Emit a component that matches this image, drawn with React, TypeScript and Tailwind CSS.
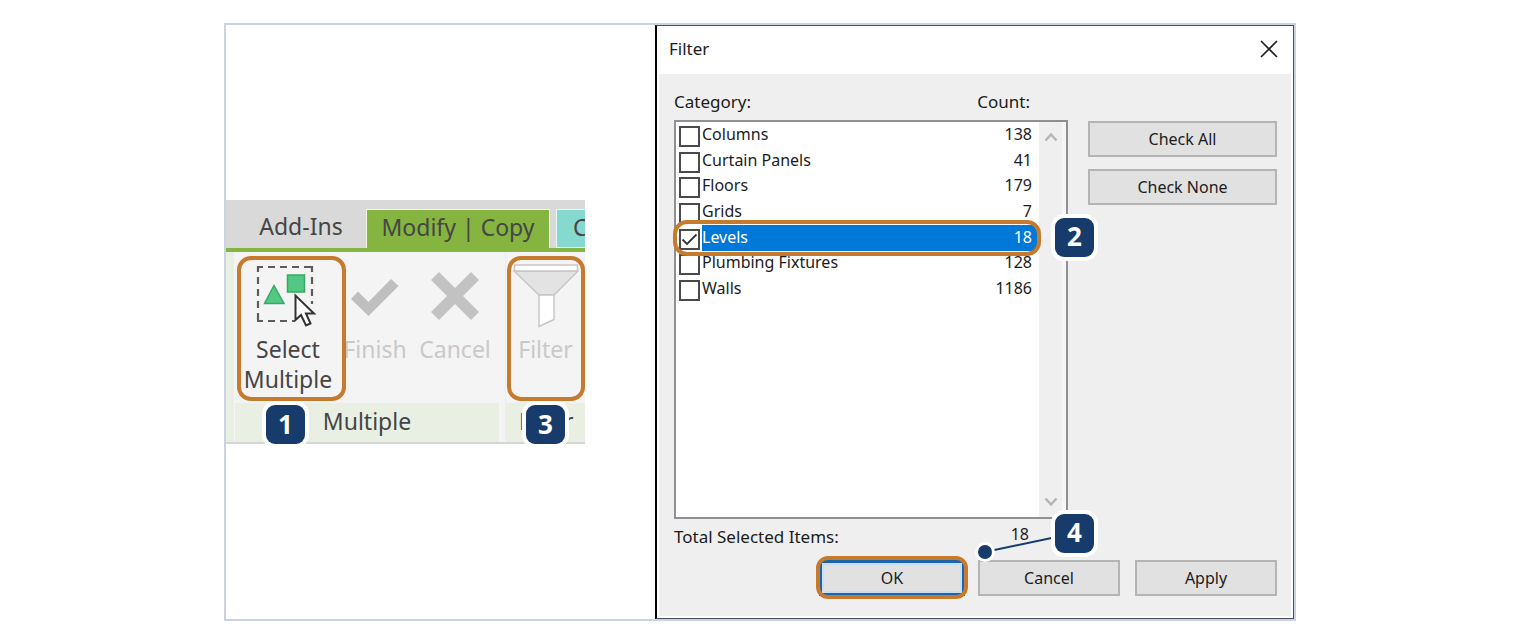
import React, { useState } from 'react';

interface Category {
  name: string;
  count: number;
}

const CATEGORIES: Category[] = [
  { name: 'Columns', count: 138 },
  { name: 'Curtain Panels', count: 41 },
  { name: 'Floors', count: 179 },
  { name: 'Grids', count: 7 },
  { name: 'Levels', count: 18 },
  { name: 'Plumbing Fixtures', count: 128 },
  { name: 'Walls', count: 1186 },
];

// Numbered callout, placed by its parent
const StepBadge: React.FC<{ step: number; className: string }> = ({ step, className }) => (
  <span
    className={`absolute z-20 flex h-[39px] w-[39px] items-center justify-center rounded-[9px] bg-[#173b6b] pb-[2px] font-['Open_Sans','Noto_Sans',sans-serif] text-[26px] font-bold text-white ring-4 ring-white ${className}`}
  >
    {step}
  </span>
);

const Highlight: React.FC<{ className: string }> = ({ className }) => (
  <span className={`pointer-events-none absolute z-10 border-4 border-[#c67a2e] ${className}`}></span>
);

const SelectIcon = () => (
  <svg className="h-[64px] w-[64px]" viewBox="0 0 64 64" fill="none">
    <g stroke="#5c5c5c" strokeWidth="2.2">
      <path d="M1 3H57" strokeDasharray="7 5" strokeDashoffset="1" />
      <path d="M1 57H39" strokeDasharray="7 5" strokeDashoffset="1" />
      <path d="M2 2V58" strokeDasharray="7 5" strokeDashoffset="1" />
      <path d="M56 2V40" strokeDasharray="7 5" strokeDashoffset="1" />
    </g>
    <path d="M18 21.500L28 39.500H8.500Z" fill="#52c882" stroke="#38a667" strokeWidth="1.500" />
    <rect x="31.500" y="11" width="17" height="17" fill="#52c882" stroke="#38a667" strokeWidth="1.500" />
    <path
      d="M39.500 31.500V56L45 51L50 61.500L54.500 59.500L50 49.500H58Z"
      fill="#fff"
      stroke="#333"
      strokeWidth="2"
    />
  </svg>
);

const FinishIcon = () => (
  <svg className="h-[64px] w-[50px]" viewBox="0 0 50 64">
    <path d="M1 35L8 27.500L18.500 38L41 15L48.500 22L18.500 52Z" fill="#bfbfbf" />
  </svg>
);

const CancelIcon = () => (
  <svg className="h-[64px] w-[50px]" viewBox="0 0 50 64">
    <path
      d="M1 16L9 8L25 24L41 8L49 16L33 32L49 48L41 56L25 40L9 56L1 48L17 32Z"
      fill="#c2c2c2"
    />
  </svg>
);

const FunnelIcon = () => (
  <svg className="h-[64px] w-[66px]" viewBox="0 0 66 64" stroke="#c6c6c6" strokeWidth="1.500">
    <path d="M1 7H65L41 31H26Z" fill="#e3e3e3" />
    <rect x="1.500" y="1" width="63" height="6" fill="#fff" />
    <path d="M26 31H41V55.500L26 62.500Z" fill="#fff" />
  </svg>
);

const Ribbon = () => (
  <div className="w-full max-w-[359px] font-['Noto_Sans','Open_Sans',sans-serif] text-[23px] text-[#454545]">
    <nav className="flex h-[48px] items-end overflow-hidden bg-[#d9d9d9]">
      <button className="h-[39px] w-[140px] shrink-0 pb-[4px] pl-[10px] leading-[35px]">Add-Ins</button>
      <button className="h-[39px] w-[184px] shrink-0 border border-b-0 border-[#f0f8e6] bg-[#85b440] pb-[4px] leading-[34px] whitespace-nowrap">
        Modify | Copy
      </button>
      <button
        className="ml-[6px] h-[39px] flex-1 overflow-hidden border border-r-0 border-[#e8f6f4] bg-[#85d9cf] pb-[4px] pl-[16px] text-left leading-[34px]"
        aria-label="Next tab"
      >
        C
      </button>
    </nav>
    <div className="h-[4px] bg-[#85b440]"></div>

    <div className="flex border-b-2 border-[#d4d7d8] bg-[#f4f4f4]">
      <div className="w-[9px] shrink-0 border-r border-[#f4f7f1] bg-[#e9efe3]"></div>
      <section className="w-[264px] shrink-0">
        <div className="flex h-[151px] text-[#c9c9c9]">
          <button className="relative flex w-[106px] shrink-0 flex-col items-center pt-[12px] text-[#454545]">
            <SelectIcon />
            <span className="mt-[6px] leading-[30px]">
              Select
              <br />
              Multiple
            </span>
            <Highlight className="top-[4px] left-[2px] h-[145px] w-[109px] rounded-[14px]" />
          </button>
          <button className="flex w-[68px] shrink-0 flex-col items-center pt-[12px]">
            <FinishIcon />
            <span className="mt-[6px] leading-[30px]">Finish</span>
          </button>
          <button className="flex flex-1 flex-col items-center pt-[12px] pl-[2px]">
            <CancelIcon />
            <span className="mt-[6px] leading-[30px]">Cancel</span>
          </button>
        </div>
        <div className="relative h-[39px] bg-[#e9efe3] text-center leading-[36px]">
          Multiple
          <StepBadge step={1} className="top-[2px] left-[31px]" />
        </div>
      </section>
      <section className="ml-[6px] flex-1 border-l border-[#e9efe3]">
        <button className="relative flex h-[151px] w-full flex-col items-center pt-[12px] text-[#c9c9c9]">
          <FunnelIcon />
          <span className="mt-[6px] leading-[30px]">Filter</span>
          <Highlight className="top-[4px] left-px h-[145px] w-[78px] rounded-[14px]" />
        </button>
        <div className="relative h-[39px] bg-[#e9efe3] pl-[13px] leading-[36px]">
          Filter
          <StepBadge step={3} className="top-[2px] left-[20px]" />
        </div>
      </section>
    </div>
  </div>
);

const FilterDialog = () => {
  const [checked, setChecked] = useState<string[]>(['Levels']);

  const total = CATEGORIES.filter((c) => checked.includes(c.name)).reduce((sum, c) => sum + c.count, 0);

  const toggle = (name: string) => {
    setChecked((prev) => (prev.includes(name) ? prev.filter((n) => n !== name) : [...prev, name]));
  };

  const buttonStyle = 'h-[36px] border-2 border-[#b4b4b4] bg-[#e1e1e1]';

  return (
    <div
      role="dialog"
      aria-label="Filter"
      className="w-[639px] shrink-0 border border-l-2 border-[#4a5060] border-l-black bg-white font-['Noto_Sans','Open_Sans',sans-serif] text-[16px] text-[#1c1c1c]"
    >
      <header className="flex h-[48px] items-center justify-between pr-[15px] pb-[3px] pl-[12px]">
        <h1 className="text-[17px]">Filter</h1>
        <button aria-label="Close">
          <svg className="h-[18px] w-[18px]" viewBox="0 0 18 18" stroke="#222" strokeWidth="1.700">
            <path d="M1 1L17 17M17 1L1 17" />
          </svg>
        </button>
      </header>

      <div className="mx-[2px] mb-[2px] bg-[#efefef] pt-[17px] pr-[14px] pb-[20px] pl-[15px]">
        <div className="flex justify-between">
          <div className="w-[394px]">
            <div className="flex h-[24px] items-center justify-between pr-[38px] pb-[2px] text-[17px]">
              <span>Category:</span>
              <span>Count:</span>
            </div>

            <div className="relative mt-[5px] flex h-[399px] border-2 border-[#8d9196] bg-white">
              <div className="flex-1 pt-px pr-px">
                <table className="h-[179px] w-full border-collapse">
                  <tbody>
                    {CATEGORIES.map((c) => {
                      const isChecked = checked.includes(c.name);
                      return (
                        <tr key={c.name} className={isChecked ? 'text-white' : ''}>
                          <td className="w-[26px] p-0 pl-[3px]">
                            <div className="relative mt-[2px] h-[21px] w-[21px]">
                              <input
                                id={c.name}
                                type="checkbox"
                                checked={isChecked}
                                onChange={() => toggle(c.name)}
                                className="block h-[21px] w-[21px] appearance-none border-2 border-[#4a4a4a] bg-white"
                              />
                              {isChecked && (
                                <svg
                                  className="pointer-events-none absolute inset-0"
                                  viewBox="0 0 21 21"
                                  fill="none"
                                  stroke="#333"
                                  strokeWidth="1.800"
                                >
                                  <path d="M3.500 10.500L8 15L17.500 5.500" />
                                </svg>
                              )}
                            </div>
                          </td>
                          <td className={`p-0 pb-[3px] leading-[22px] ${isChecked ? 'bg-[#0078d7]' : ''}`}>
                            <label htmlFor={c.name} className="block">
                              {c.name}
                            </label>
                          </td>
                          <td
                            className={`p-0 pr-[6px] pb-[3px] text-right leading-[22px] ${isChecked ? 'bg-[#0078d7]' : ''}`}
                          >
                            {c.count}
                          </td>
                        </tr>
                      );
                    })}
                  </tbody>
                </table>
              </div>
              <div className="flex w-[27px] flex-col items-center justify-between border-r-4 border-[#f6f6f6] bg-[#efefef] py-[10px]">
                <svg className="h-[10px] w-[14px]" viewBox="0 0 14 10" fill="none" stroke="#b5b5b5" strokeWidth="2.500">
                  <path d="M1.500 8.500L7 2.500L12.500 8.500" />
                </svg>
                <svg className="h-[10px] w-[14px]" viewBox="0 0 14 10" fill="none" stroke="#b5b5b5" strokeWidth="2.500">
                  <path d="M1.500 1.500L7 7.500L12.500 1.500" />
                </svg>
              </div>
              <Highlight className="top-[98px] left-[-3px] h-[36px] w-[368px] rounded-[14px]" />
              <StepBadge step={2} className="top-[96px] left-[379px]" />
            </div>

            <div className="relative flex h-[36px] items-center justify-between pr-[39px]">
              <span className="text-[17px]">Total Selected Items:</span>
              <span className="pb-[6px]">{total}</span>
              {/* leader line from badge 4 to the button row */}
              <svg className="absolute top-[10px] left-[299px] h-[34px] w-[90px]" viewBox="0 0 90 34">
                <path d="M12 23L88 7" stroke="#173b6b" strokeWidth="2" />
                <circle cx="12" cy="23" r="10" fill="#fff" />
                <circle cx="12" cy="23" r="7" fill="#173b6b" />
              </svg>
              <StepBadge step={4} className="top-[-5px] left-[381px]" />
            </div>
          </div>

          <div className="flex w-[189px] flex-col gap-[12px] pt-[30px]">
            <button className={buttonStyle} onClick={() => setChecked(CATEGORIES.map((c) => c.name))}>
              Check All
            </button>
            <button className={buttonStyle} onClick={() => setChecked([])}>
              Check None
            </button>
          </div>
        </div>

        <div className="mt-[5px] flex justify-end">
          <button className="relative h-[36px] w-[146px] border-[3px] border-[#1e63ab] bg-[#e1e1e1] inset-ring-2 inset-ring-[#c4e0f8]">
            OK
            <Highlight className="top-[-7px] left-[-6px] h-[43px] w-[152px] rounded-[12px]" />
          </button>
          <button className={`${buttonStyle} ml-[13px] w-[142px]`}>Cancel</button>
          <button className={`${buttonStyle} ml-[15px] w-[142px]`}>Apply</button>
        </div>
      </div>
    </div>
  );
};

export default function App() {
  return (
    <main className="min-h-screen bg-white py-[23px]">
      <div className="mx-auto flex max-w-[1072px] border-2 border-[#ccd3e0]">
        <div className="flex flex-1 items-center">
          <Ribbon />
        </div>
        <FilterDialog />
      </div>
    </main>
  );
}
